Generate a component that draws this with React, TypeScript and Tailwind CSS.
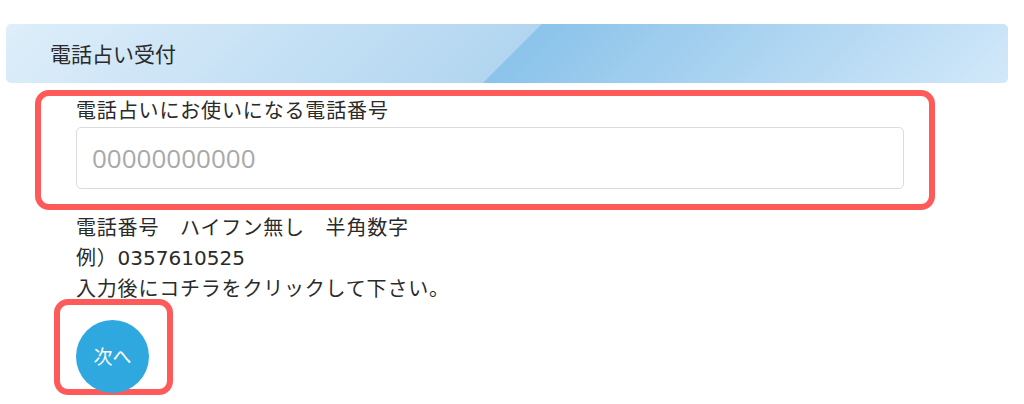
import React from "react";

export default function App() {
  const jp = { fontFamily: '"Noto Sans CJK JP", "Noto Sans", sans-serif' };
  const latin = { fontFamily: '"DejaVu Sans", "Noto Sans CJK JP", sans-serif' };
  return (
    <div className="w-[1024px] h-[404px] bg-white overflow-hidden text-[#2a2a2a]" style={jp}>
      <div className="pt-[24px] pl-[6px]">
        <div className="w-[1002px] h-[59px] rounded-[5px] flex items-center pl-[44px] bg-[linear-gradient(135deg,#deeefa_0%,#b2d6f0_50.4%,#8bc3ea_50.6%,#d2e8f9_100%)]">
          <span className="text-[21px] leading-none text-[#2a2a2a]">電話占い受付</span>
        </div>
      </div>
      <div className="ml-[35px] mt-[7px] w-[900px] h-[120px] border-[6px] border-[#ff5a5a] rounded-[14px] pl-[35px]">
        <div className="text-[20px] leading-[28px] tracking-[0.85px]">電話占いにお使いになる電話番号</div>
        <div className="mt-[3px] w-[828px] h-[62px] border border-[#dcdcdc] rounded-[5px] flex items-center pl-[15px]">
          <span className="text-[26px] text-[#a9a9a9]" style={{ fontFamily: '"Open Sans", "Noto Sans", sans-serif' }}>
            00000000000
          </span>
        </div>
      </div>
      <div className="pl-[76px] mt-[2px] text-[20px] leading-[30px] tracking-[0.8px]">
        <div>電話番号　ハイフン無し　半角数字</div>
        <div>
          例）<span className="tracking-normal" style={latin}>0357610525</span>
        </div>
        <div>入力後にコチラをクリックして下さい。</div>
      </div>
      <div className="ml-[54px] mt-[-4px] w-[119px] h-[96px] border-[6px] border-[#ff5a5a] rounded-[14px] pl-[16px] pt-[15px]">
        <div className="w-[73px] h-[73px] rounded-full bg-[#2fa8e0] flex items-center justify-center text-white text-[19px]">
          次へ
        </div>
      </div>
    </div>
  );
}
